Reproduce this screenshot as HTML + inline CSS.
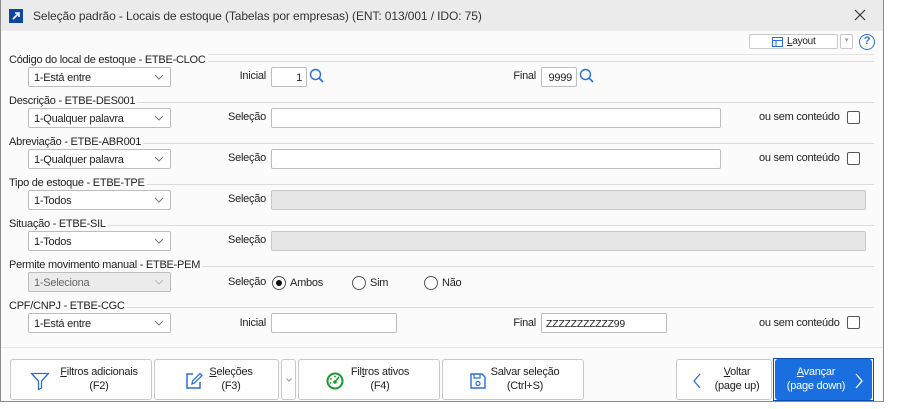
<!DOCTYPE html>
<html><head><meta charset="utf-8"><style>
*{box-sizing:border-box}
body{margin:0;width:898px;height:409px;background:#fff;font-family:"Liberation Sans",sans-serif;font-size:11px;letter-spacing:-0.25px;color:#222;position:relative;overflow:hidden}
.a{position:absolute}
.win{left:0;top:0;width:884px;height:402px;border:1px solid #8a8a8a;border-top:none;background:#fbfbfb}
.title{left:1px;top:0;width:882px;height:31px;background:#ebebeb}
.lbl{white-space:nowrap}
.rl{white-space:nowrap;text-align:right}
.sl{white-space:nowrap;background:#fbfbfb;padding-right:2px}
.sec{height:1px;background:#dcdcdc}
.sel{width:143px;height:20px;border:1px solid #bdbdbd;border-radius:2px;background:#fff;padding:4px 0 0 5px}
.sel svg{position:absolute;right:6px;top:6px}
.sel.dis{background:#ececec;color:#666}
.inp{height:20px;border:1px solid #bdbdbd;border-radius:2px;background:#fff;padding:4px 4px 0}
.inp.dis{background:#e6e6e6;border-color:#c8c8c8}
.chk{width:13px;height:13px;border:1px solid #555;border-radius:2px;background:#fff}
.btn{top:359px;height:41px;border:1px solid #c8c8c8;border-radius:3px;background:#fff;text-align:center;line-height:14px;white-space:nowrap}
.btn .t{position:absolute;top:5px}
.rad{width:14px;height:14px;border:1px solid #555;border-radius:50%;background:#fff}
</style></head><body>
<div class="a win"></div>
<div class="a title"></div>
<div class="a" style="left:9px;top:9px;width:14px;height:14px;background:#0d47a1"><svg width="14" height="14"><path d="M4 10 L10 4 M6 4 H10 V8" stroke="#fff" stroke-width="1.6" fill="none"/></svg></div>
<div class="a lbl" style="left:33px;top:9px;font-size:12px;letter-spacing:-0.1px;color:#333">Seleção padrão - Locais de estoque (Tabelas por empresas) (ENT: 013/001 / IDO: 75)</div>
<div class="a" style="left:853px;top:8px"><svg width="14" height="14"><path d="M2 2L12 12M12 2L2 12" stroke="#333" stroke-width="1.2"/></svg></div>

<div class="a" style="left:749px;top:34px;width:89px;height:15px;border:1px solid #c8c8c8;border-radius:2px;background:#fff"></div>
<div class="a" style="left:772px;top:37px"><svg width="11" height="10"><rect x=".5" y=".5" width="10" height="9" fill="none" stroke="#2a6fd6"/><path d="M.5 3.5H10.5M4 3.5V9.5" stroke="#2a6fd6"/></svg></div>
<div class="a lbl" style="left:787px;top:36px;font-size:10px"><u>L</u>ayout</div>
<div class="a" style="left:840px;top:34px;width:13px;height:15px;border:1px solid #c8c8c8;border-radius:2px;background:#fff;font-size:7px;color:#999;text-align:center;line-height:12px">▾</div>
<div class="a" style="left:859px;top:34px;width:16px;height:16px;border:1.5px solid #2a6fd6;border-radius:50%;color:#2a6fd6;font-size:11px;font-weight:bold;text-align:center;line-height:13px">?</div>
<div class="a sec" style="left:9px;top:54px;width:865px;background:#e2e2e2"></div>

<!-- section lines -->
<div class="a sec" style="left:9px;top:61px;width:865px"></div>
<div class="a sec" style="left:9px;top:102px;width:865px"></div>
<div class="a sec" style="left:9px;top:143px;width:865px"></div>
<div class="a sec" style="left:9px;top:184px;width:865px"></div>
<div class="a sec" style="left:9px;top:225px;width:865px"></div>
<div class="a sec" style="left:9px;top:266px;width:865px"></div>
<div class="a sec" style="left:9px;top:307px;width:865px"></div>

<!-- row 1 -->
<div class="a sl" style="left:9px;top:54px">Código do local de estoque - ETBE-CLOC</div>
<div class="a sel" style="left:28px;top:67px">1-Está entre<svg width="10" height="6"><path d="M1 1L5 5L9 1" stroke="#777" fill="none"/></svg></div>
<div class="a rl" style="right:632px;top:70px">Inicial</div>
<div class="a inp" style="left:271px;top:67px;width:36px;text-align:right">1</div>
<div class="a" style="left:309px;top:68px"><svg width="16" height="16"><circle cx="6.5" cy="6.5" r="5" stroke="#2a6fd6" stroke-width="1.4" fill="none"/><path d="M10 10L14 14" stroke="#2a6fd6" stroke-width="1.6"/></svg></div>
<div class="a rl" style="right:362px;top:70px">Final</div>
<div class="a inp" style="left:541px;top:67px;width:36px;text-align:right">9999</div>
<div class="a" style="left:579px;top:68px"><svg width="16" height="16"><circle cx="6.5" cy="6.5" r="5" stroke="#2a6fd6" stroke-width="1.4" fill="none"/><path d="M10 10L14 14" stroke="#2a6fd6" stroke-width="1.6"/></svg></div>

<!-- row 2 -->
<div class="a sl" style="left:9px;top:95px">Descrição - ETBE-DES001</div>
<div class="a sel" style="left:28px;top:108px">1-Qualquer palavra<svg width="10" height="6"><path d="M1 1L5 5L9 1" stroke="#777" fill="none"/></svg></div>
<div class="a rl" style="right:632px;top:111px">Seleção</div>
<div class="a inp" style="left:271px;top:108px;width:450px"></div>
<div class="a lbl" style="left:759px;top:111px">ou sem conteúdo</div>
<div class="a chk" style="left:847px;top:111px"></div>

<!-- row 3 -->
<div class="a sl" style="left:9px;top:136px">Abreviação - ETBE-ABR001</div>
<div class="a sel" style="left:28px;top:149px">1-Qualquer palavra<svg width="10" height="6"><path d="M1 1L5 5L9 1" stroke="#777" fill="none"/></svg></div>
<div class="a rl" style="right:632px;top:152px">Seleção</div>
<div class="a inp" style="left:271px;top:149px;width:450px"></div>
<div class="a lbl" style="left:759px;top:152px">ou sem conteúdo</div>
<div class="a chk" style="left:847px;top:152px"></div>

<!-- row 4 -->
<div class="a sl" style="left:9px;top:177px">Tipo de estoque - ETBE-TPE</div>
<div class="a sel" style="left:28px;top:190px">1-Todos<svg width="10" height="6"><path d="M1 1L5 5L9 1" stroke="#777" fill="none"/></svg></div>
<div class="a rl" style="right:632px;top:193px">Seleção</div>
<div class="a inp dis" style="left:271px;top:190px;width:595px"></div>

<!-- row 5 -->
<div class="a sl" style="left:9px;top:218px">Situação - ETBE-SIL</div>
<div class="a sel" style="left:28px;top:231px">1-Todos<svg width="10" height="6"><path d="M1 1L5 5L9 1" stroke="#777" fill="none"/></svg></div>
<div class="a rl" style="right:632px;top:234px">Seleção</div>
<div class="a inp dis" style="left:271px;top:231px;width:595px"></div>

<!-- row 6 -->
<div class="a sl" style="left:9px;top:259px">Permite movimento manual - ETBE-PEM</div>
<div class="a sel dis" style="left:28px;top:272px">1-Seleciona<svg width="10" height="6"><path d="M1 1L5 5L9 1" stroke="#bbb" fill="none"/></svg></div>
<div class="a rl" style="right:632px;top:276px">Seleção</div>
<div class="a rad" style="left:272px;top:276px"><div class="a" style="left:3px;top:3px;width:6px;height:6px;border-radius:50%;background:#111"></div></div>
<div class="a lbl" style="left:290px;top:277px">Ambos</div>
<div class="a rad" style="left:352px;top:276px"></div>
<div class="a lbl" style="left:370px;top:277px">Sim</div>
<div class="a rad" style="left:424px;top:276px"></div>
<div class="a lbl" style="left:442px;top:277px">Não</div>

<!-- row 7 -->
<div class="a sl" style="left:9px;top:300px">CPF/CNPJ - ETBE-CGC</div>
<div class="a sel" style="left:28px;top:313px">1-Está entre<svg width="10" height="6"><path d="M1 1L5 5L9 1" stroke="#777" fill="none"/></svg></div>
<div class="a rl" style="right:632px;top:317px">Inicial</div>
<div class="a inp" style="left:271px;top:313px;width:126px"></div>
<div class="a rl" style="right:362px;top:317px">Final</div>
<div class="a inp" style="left:541px;top:313px;width:126px;font-size:10.5px">ZZZZZZZZZZZ99</div>
<div class="a lbl" style="left:759px;top:317px">ou sem conteúdo</div>
<div class="a chk" style="left:847px;top:316px"></div>

<div class="a sec" style="left:1px;top:347px;width:882px;background:#e6e6e6"></div>

<!-- footer buttons -->
<div class="a btn" style="left:10px;width:142px">
 <svg class="a" style="left:19px;top:11px" width="20" height="20"><path d="M1.5 2.5H18.5L11.5 10V17L8.5 18.5V10Z" fill="none" stroke="#2a6fd6" stroke-width="1.3" stroke-linejoin="round"/></svg>
 <div class="t" style="left:43px;width:90px"><u>F</u>iltros adicionais<br>(F2)</div></div>
<div class="a btn" style="left:154px;width:125px">
 <svg class="a" style="left:29px;top:11px" width="20" height="20"><path d="M9 3H3V17H16V11" fill="none" stroke="#2a6fd6" stroke-width="1.5"/><path d="M8 13L8.5 10L16 2.5L18 4.5L10.5 12Z" fill="none" stroke="#2a6fd6" stroke-width="1.3"/></svg>
 <div class="t" style="left:51px;width:50px"><u>S</u>eleções<br>(F3)</div></div>
<div class="a btn" style="left:281px;width:15px"><svg class="a" style="left:4px;top:18px" width="6" height="4"><path d="M.5 .5L3 3L5.5 .5" stroke="#999" fill="none"/></svg></div>
<div class="a btn" style="left:298px;width:142px">
 <svg class="a" style="left:27px;top:12px" width="18" height="18"><circle cx="9" cy="9" r="7.5" fill="none" stroke="#1a9a2a" stroke-width="2"/><circle cx="9" cy="10" r="1.8" fill="#1a9a2a"/><path d="M9 10L13 5" stroke="#1a9a2a" stroke-width="1.5"/><circle cx="5" cy="7" r=".9" fill="#1a9a2a"/><circle cx="9" cy="4.5" r=".9" fill="#1a9a2a"/><circle cx="4.5" cy="11" r=".9" fill="#1a9a2a"/></svg>
 <div class="t" style="left:48px;width:66px">Fil<u>t</u>ros ativos<br>(F4)</div></div>
<div class="a btn" style="left:442px;width:142px">
 <svg class="a" style="left:26px;top:12px" width="18" height="18"><path d="M2 2H13L16 5V16H2Z" fill="none" stroke="#2a6fd6" stroke-width="1.4"/><path d="M5 2V6H11V2" fill="none" stroke="#2a6fd6" stroke-width="1.2"/><circle cx="9" cy="11.5" r="2" fill="none" stroke="#2a6fd6" stroke-width="1.2"/></svg>
 <div class="t" style="left:46px;width:72px">Salvar seleção<br>(Ctrl+S)</div></div>
<div class="a btn" style="left:676px;width:96px">
 <svg class="a" style="left:15px;top:13px" width="10" height="16"><path d="M8 1L2 8L8 15" fill="none" stroke="#2a6fd6" stroke-width="1.3"/></svg>
 <div class="t" style="left:32px;width:56px"><u>V</u>oltar<br>(page up)</div></div>
<div class="a" style="left:773px;top:358px;width:101px;height:43px;border:1px solid #0c4fb0"></div>
<div class="a btn" style="left:775px;width:97px;background:#1a6fe0;border-color:#1a6fe0;color:#fff">
 <svg class="a" style="left:78px;top:13px" width="10" height="16"><path d="M2 1L8 8L2 15" fill="none" stroke="#fff" stroke-width="1.3"/></svg>
 <div class="t" style="left:4px;width:72px"><u>A</u>vançar<br>(page down)</div></div>
</body></html>
